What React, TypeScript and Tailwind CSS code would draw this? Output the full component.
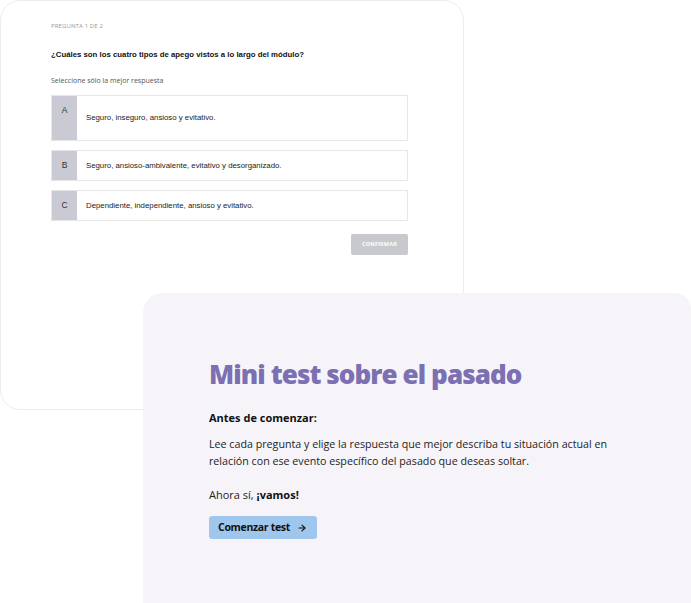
import { ArrowRight } from "lucide-react";

const options = [
  { key: "A", text: "Seguro, inseguro, ansioso y evitativo.", tall: true },
  { key: "B", text: "Seguro, ansioso-ambivalente, evitativo y desorganizado." },
  { key: "C", text: "Dependiente, independiente, ansioso y evitativo." },
];

function QuizCard() {
  return (
    <div className="h-[410px] w-[464px] rounded-[20px] border border-[#ececec] bg-white pl-[50px] pr-[55px] pt-[21px] font-['Liberation_Sans',Arial,sans-serif]">
      <p className="text-[6px] leading-[8px] tracking-[0.02em] text-[#9a9a9a] font-['Open_Sans',sans-serif]">PREGUNTA 1 DE 2</p>
      <h2 className="mt-[20px] text-[7.8px] font-bold leading-[10px] text-[#111]">
        ¿Cuáles son los cuatro tipos de apego vistos a lo largo del módulo?
      </h2>
      <p className="mt-[16px] text-[7px] leading-[9px] text-[#555] font-['Open_Sans',sans-serif]">
        Seleccione sólo la mejor respuesta
      </p>
      <div className="mt-[10px] flex flex-col gap-[9px]">
        {options.map((o) => (
          <div key={o.key} className={`flex border border-[#e6e6e6] ${o.tall ? "h-[46px]" : "h-[31px]"}`}>
            <div
              className={`flex w-[25px] shrink-0 justify-center bg-[#c9cad4] text-[8.5px] text-[#333] ${
                o.tall ? "items-start pt-[8px]" : "items-center"
              }`}
            >
              {o.key}
            </div>
            <div className="flex items-center pl-[9px] text-[7.8px] text-[#222]">{o.text}</div>
          </div>
        ))}
      </div>
      <div className="mt-[13px] flex justify-end">
        <button className="h-[21px] w-[57px] rounded-[2px] bg-[#c8c9cc] text-[5.5px] font-bold tracking-[0.03em] text-white font-['Open_Sans',sans-serif]">
          CONFIRMAR
        </button>
      </div>
    </div>
  );
}

function IntroCard() {
  return (
    <div className="relative -mt-[117px] ml-[143px] h-[320px] rounded-tl-[20px] rounded-tr-[16px] bg-[#f6f4f9] pl-[66px] pt-[64px] font-['Open_Sans',sans-serif] text-[#1d1d1d]">
      <h1 className="text-[26px] font-extrabold leading-[34px] tracking-[-0.035em] text-[#7b70b2]">
        Mini test sobre el pasado
      </h1>
      <p className="mt-[20px] text-[11px] font-bold leading-[14px] text-[#111]">Antes de comenzar:</p>
      <p className="mt-[11px] w-[420px] text-[10.7px] leading-[17px]">
        Lee cada pregunta y elige la respuesta que mejor describa tu situación actual en relación con ese evento
        específico del pasado que deseas soltar.
      </p>
      <p className="mt-[18px] text-[11px] leading-[14px]">
        Ahora sí, <span className="font-bold text-[#111]">¡vamos!</span>
      </p>
      <button className="mt-[14px] flex h-[23px] items-center gap-[7px] rounded-[3px] bg-[#9fc6ec] pl-[9px] pr-[10px] text-[10.5px] font-bold tracking-[-0.03em] text-[#111]">
        Comenzar test <ArrowRight size={10} strokeWidth={2.75} />
      </button>
    </div>
  );
}

export default function App() {
  return (
    <div className="h-[603px] w-[691px] overflow-hidden bg-white">
      <QuizCard />
      <IntroCard />
    </div>
  );
}
